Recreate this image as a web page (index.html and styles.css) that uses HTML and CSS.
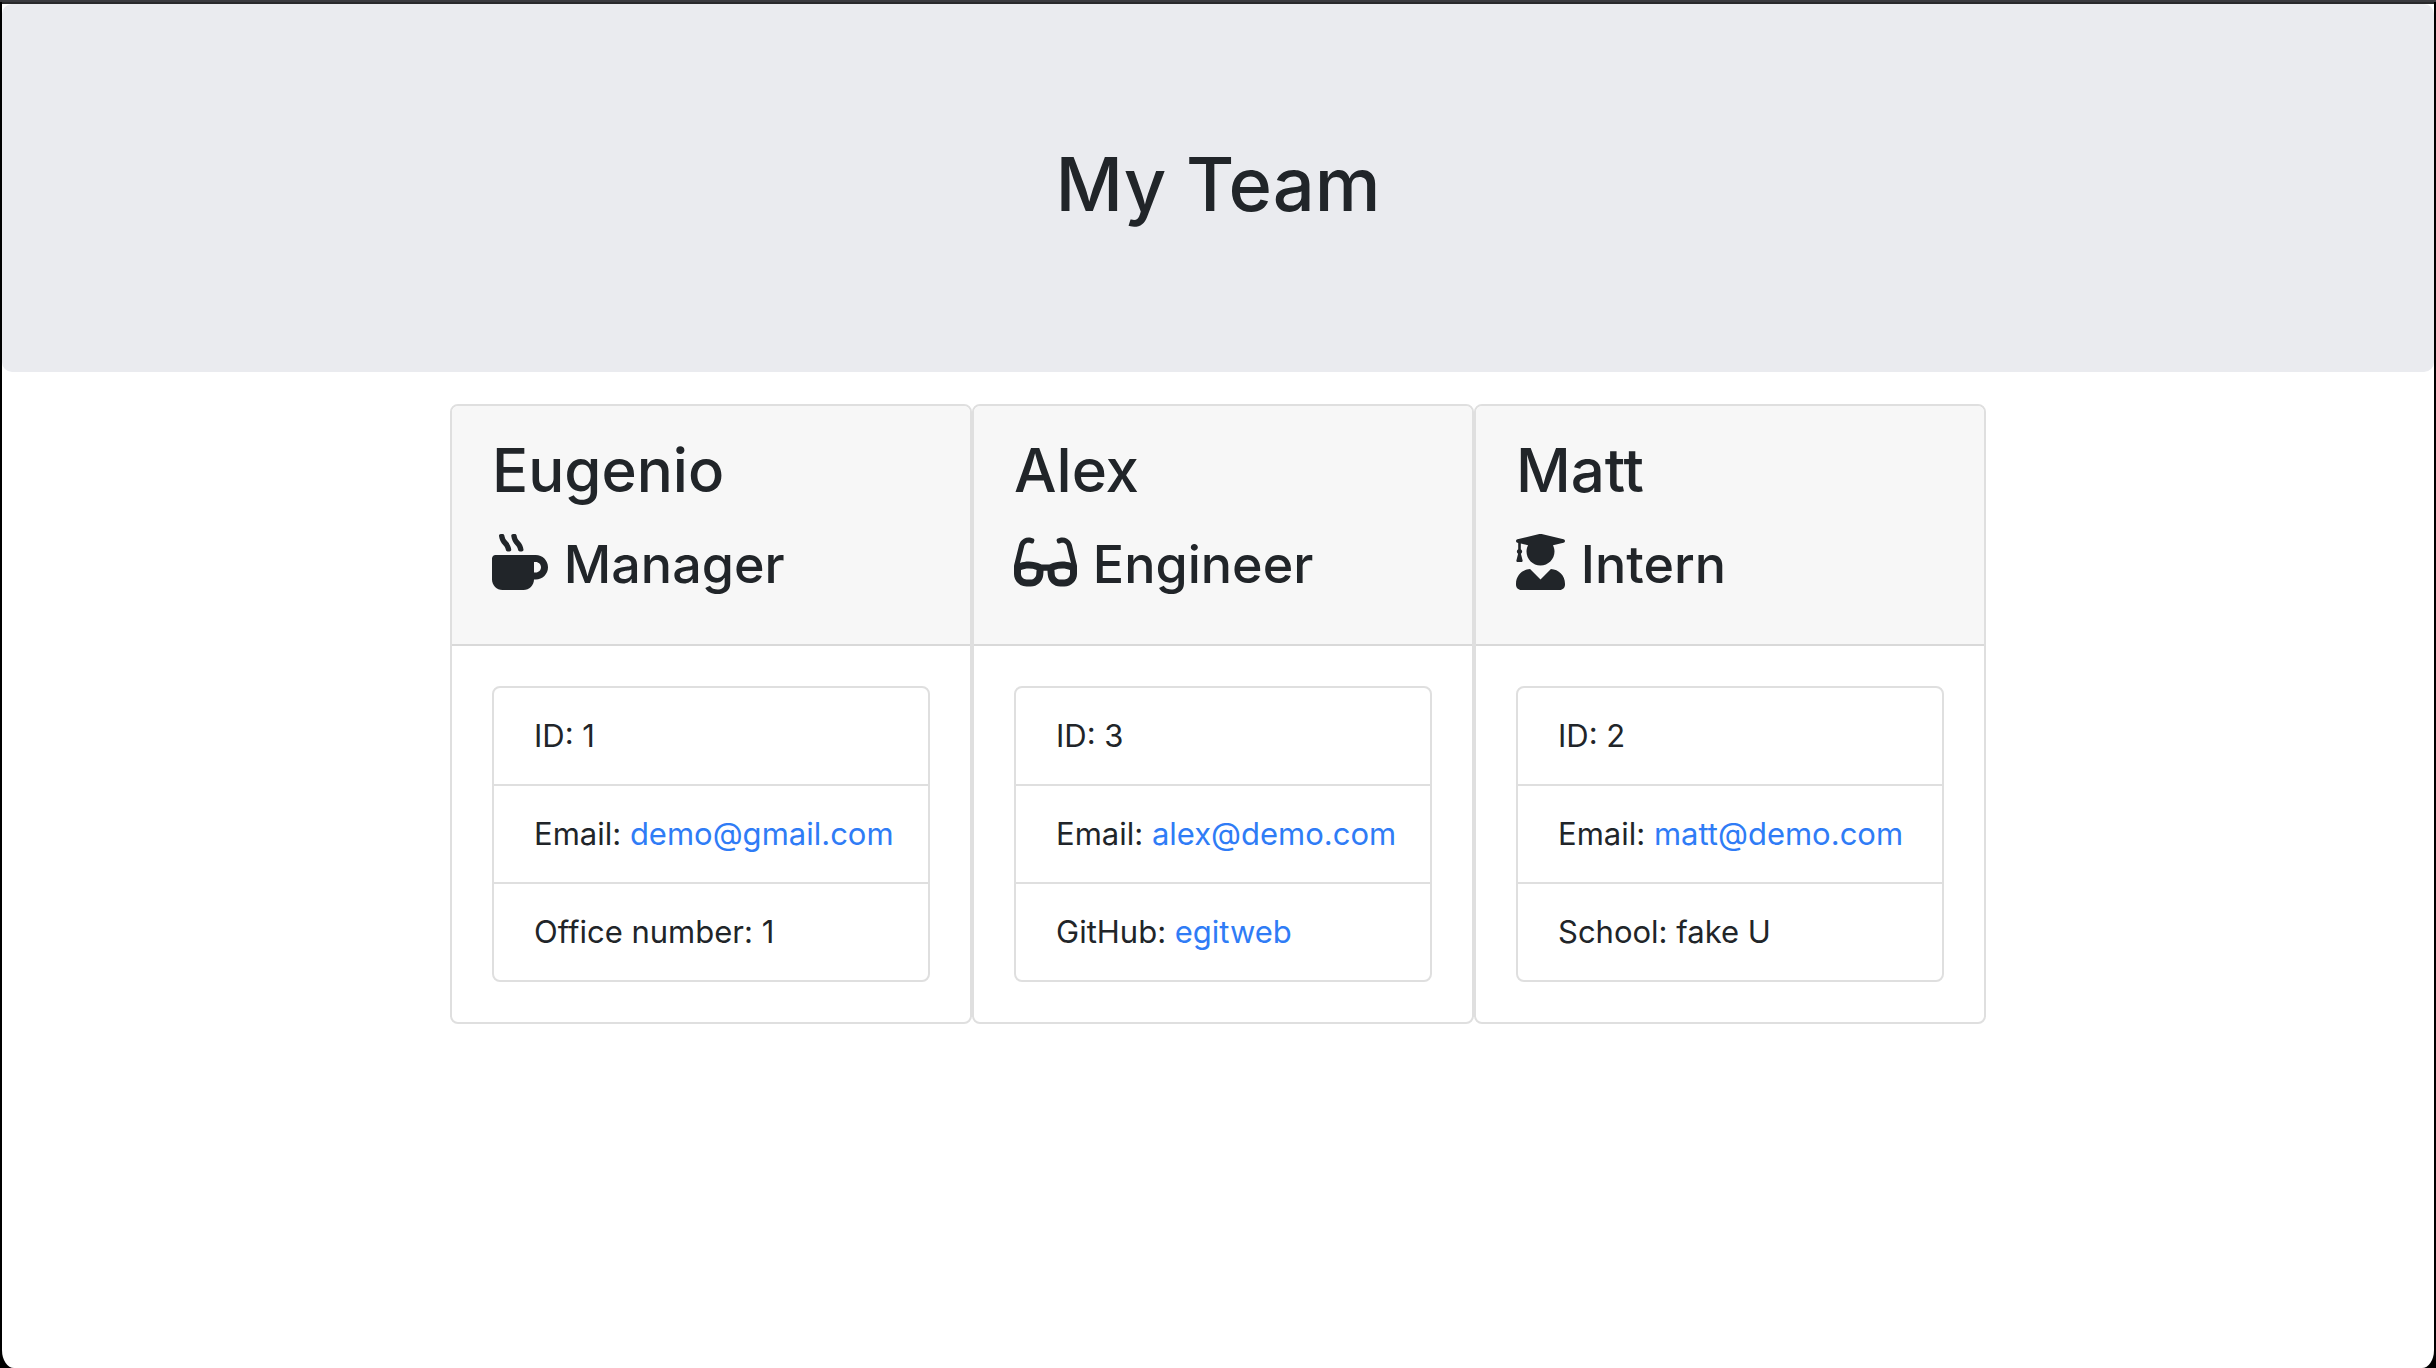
FILE: index.html
```html
<!DOCTYPE html>
<html lang="en">
<head>
<meta charset="utf-8">
<meta name="viewport" content="width=device-width, initial-scale=1">
<title>My Team</title>
<link rel="stylesheet" href="styles.css">
</head>
<body>
<div class="page">
  <header class="jumbotron">
    <h1 class="title">My Team</h1>
  </header>
  <main class="team">
    <article class="card card-manager">
      <div class="card-header">
        <h2 class="name">Eugenio</h2>
        <h3 class="role"><svg class="icon" viewBox="0 0 512 512" width="56" height="56" aria-hidden="true"><path d="M127.1 146.5c1.3 7.7 8 13.5 16 13.5h16.5c9.8 0 17.6-8.5 16.3-18-3.8-28.2-16.4-54.2-36.6-74.7-14.4-14.7-23.6-33.3-26.4-53.5C111.8 5.9 105 0 96.8 0H80.4C70.6 0 63 8.5 64.1 18c3.9 31.9 18 61.3 40.6 84.4 12 12.2 19.7 27.5 22.4 44.1zm112 0c1.3 7.7 8 13.5 16 13.5h16.5c9.8 0 17.6-8.5 16.3-18-3.8-28.2-16.4-54.2-36.6-74.7-14.4-14.7-23.6-33.3-26.4-53.5C223.8 5.9 217 0 208.8 0h-16.4c-9.8 0-17.5 8.5-16.3 18 3.9 31.9 18 61.3 40.6 84.4 12 12.2 19.7 27.5 22.4 44.1zM400 192H32c-17.7 0-32 14.3-32 32v192c0 53 43 96 96 96h192c53 0 96-43 96-96h16c61.8 0 112-50.2 112-112s-50.2-112-112-112zm0 160h-16v-96h16c26.5 0 48 21.5 48 48s-21.5 48-48 48z"/></svg> Manager</h3>
      </div>
      <div class="card-body">
        <ul class="list">
          <li class="item">ID: 1</li>
          <li class="item">Email: <a class="link" href="mailto:demo@gmail.com">demo@gmail.com</a></li>
          <li class="item">Office number: 1</li>
        </ul>
      </div>
    </article>
    <article class="card card-engineer">
      <div class="card-header">
        <h2 class="name">Alex</h2>
        <h3 class="role"><svg class="icon" viewBox="0 0 576 512" width="63" height="56" aria-hidden="true"><path d="M574.1 280.37L528.75 98.66c-5.91-23.7-21.59-44.05-43-55.81-21.44-11.73-46.97-14.11-70.19-6.33l-15.25 5.08c-8.39 2.79-12.92 11.86-10.12 20.24l5.06 15.18c2.79 8.38 11.85 12.91 20.23 10.12l13.18-4.39c10.87-3.62 23-3.57 33.16 1.73 10.29 5.37 17.57 14.56 20.37 25.82l38.46 153.82c-22.19-6.81-49.79-12.46-81.2-12.46-34.77 0-73.98 7.02-114.85 26.74h-73.18c-40.87-19.74-80.08-26.75-114.86-26.75-31.42 0-59.02 5.65-81.21 12.46l38.46-153.83c2.79-11.25 10.09-20.45 20.38-25.81 10.16-5.3 22.28-5.35 33.15-1.73l13.17 4.39c8.38 2.79 17.44-1.74 20.23-10.12l5.06-15.18c2.8-8.38-1.73-17.45-10.12-20.24l-15.25-5.08c-23.22-7.78-48.75-5.41-70.19 6.33-21.41 11.77-37.09 32.11-43 55.8L1.9 280.37A64.218 64.218 0 0 0 0 295.86v70.25C0 429.01 51.58 480 115.2 480h37.12c60.28 0 110.37-45.94 114.88-105.37l2.93-38.63h35.75l2.93 38.63C313.31 434.06 363.4 480 423.68 480h37.12c63.62 0 115.2-50.99 115.2-113.88v-70.25c0-5.23-.64-10.43-1.9-15.5zm-370.72 89.42c-1.97 25.91-24.4 46.21-51.06 46.21H115.2C86.97 416 64 393.62 64 366.11v-37.54c18.12-6.49 43.42-12.92 72.58-12.92 23.86 0 47.26 4.33 69.93 12.92l-3.13 41.22zM512 366.12c0 27.51-22.97 49.88-51.2 49.88h-37.12c-26.67 0-49.1-20.3-51.06-46.21l-3.13-41.22c22.67-8.59 46.08-12.92 69.95-12.92 29.12 0 54.43 6.44 72.55 12.93v37.54z"/></svg> Engineer</h3>
      </div>
      <div class="card-body">
        <ul class="list">
          <li class="item">ID: 3</li>
          <li class="item">Email: <a class="link" href="mailto:alex@demo.com">alex@demo.com</a></li>
          <li class="item">GitHub: <a class="link" href="https://github.com/egitweb">egitweb</a></li>
        </ul>
      </div>
    </article>
    <article class="card card-intern">
      <div class="card-header">
        <h2 class="name">Matt</h2>
        <h3 class="role"><svg class="icon" viewBox="0 0 448 512" width="49" height="56" aria-hidden="true"><path d="M319.4 320.6L224 416l-95.4-95.4C57.1 323.7 0 382.2 0 454.4v9.6c0 26.5 21.5 48 48 48h352c26.5 0 48-21.5 48-48v-9.6c0-72.2-57.1-130.7-128.6-133.8zM13.6 79.8l6.4 1.5v58.4c-7 4.2-12 11.5-12 20.3 0 8.4 4.6 15.4 11.1 19.7L3.5 242c-1.7 6.9 2.1 14 7.6 14h41.8c5.5 0 9.3-7.1 7.6-14l-15.6-62.3C51.4 175.4 56 168.4 56 160c0-8.8-5-16.1-12-20.3V87.1l66 15.9c-8.6 17.2-14 36.4-14 57 0 70.7 57.3 128 128 128s128-57.3 128-128c0-20.6-5.3-39.8-14-57l96.3-23.2c18.2-4.4 18.2-27.1 0-31.5l-190.4-46c-13-3.1-26.7-3.1-39.7 0L13.6 48.2c-18.1 4.4-18.1 27.2 0 31.6z"/></svg> Intern</h3>
      </div>
      <div class="card-body">
        <ul class="list">
          <li class="item">ID: 2</li>
          <li class="item">Email: <a class="link" href="mailto:matt@demo.com">matt@demo.com</a></li>
          <li class="item">School: fake U</li>
        </ul>
      </div>
    </article>
  </main>
</div>
</body>
</html>
```
FILE: styles.css
```css
* {
  box-sizing: border-box;
}

body {
  margin: 0;
  min-height: 100vh;
  display: flex;
  flex-direction: column;
  padding: 0 2px;
  border-top: 2px solid #3a3a3e;
  background: #000;
  color: #212529;
  font: 400 31px/48px Inter, "Liberation Sans", sans-serif;
}

.page {
  flex: 1;
  border-top: 2px solid #29292b;
  border-radius: 0 0 12px 12px / 0 0 18px 18px;
  background: #fff;
}

.jumbotron {
  margin-bottom: 32px;
  padding: 132px 64px 140px;
  border-radius: 10px;
  background: #eaebef;
}

.title,
.name,
.role {
  margin: 0;
  font-weight: 500;
}

.title {
  font-size: 74px;
  line-height: 96px;
  text-align: center;
}

.team {
  display: flex;
  justify-content: center;
}

.card {
  border: 2px solid #dfdfdf;
  border-radius: 8px;
  background: #fff;
}

.card-manager {
  flex: 0 1 522px;
}

.card-engineer {
  flex: 0 1 502px;
}

.card-intern {
  flex: 0 1 512px;
}

.card-header {
  padding: 26px 40px 38px;
  border-bottom: 2px solid #d9d9d9;
  border-radius: 6px 6px 0 0;
  background: #f7f7f7;
}

.name {
  margin-bottom: 16px;
  font-size: 60px;
  line-height: 76px;
}

.role {
  font-size: 52px;
  line-height: 82px;
  white-space: nowrap;
}

.icon {
  margin-right: 2px;
  vertical-align: -7px;
  fill: currentColor;
}

.card-body {
  padding: 40px;
}

.list {
  margin: 0;
  padding: 0;
  border: 2px solid #dfdfdf;
  border-radius: 8px;
  list-style: none;
}

.item {
  padding: 24px 32px 24px 40px;
  white-space: nowrap;
}

.item + .item {
  border-top: 2px solid #dfdfdf;
}

.link {
  color: #2f7cf6;
  text-decoration: none;
}
```
